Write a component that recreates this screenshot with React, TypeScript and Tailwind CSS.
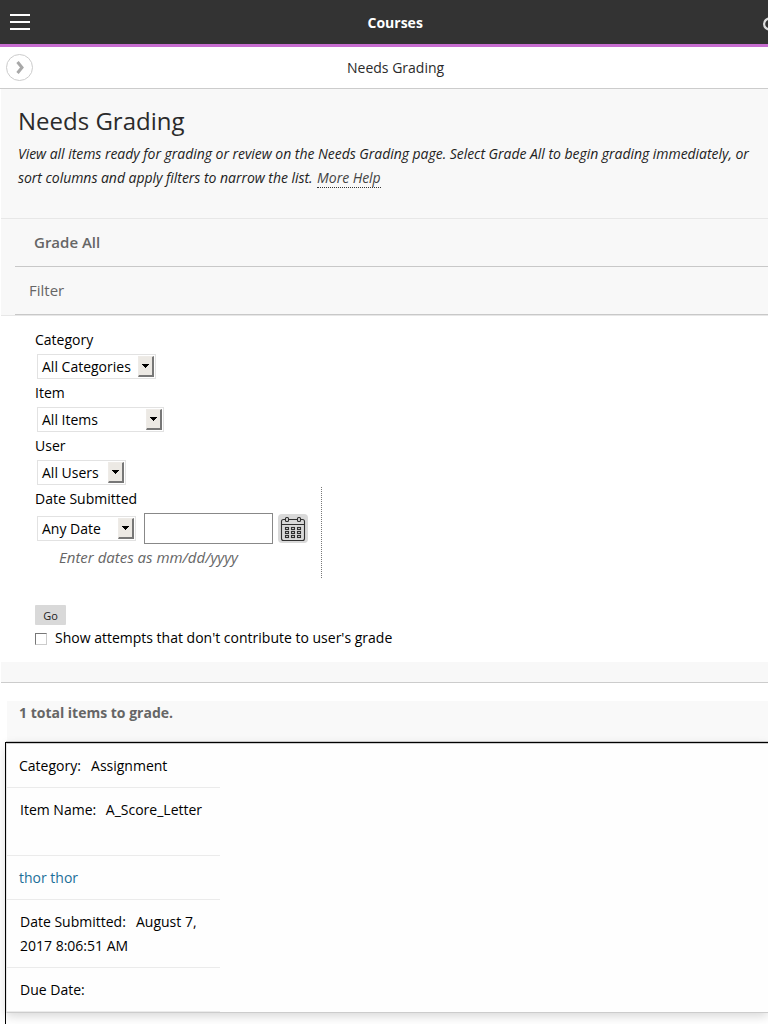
import type { ReactNode } from "react";

function Select({ label, className }: { label: string; className: string }) {
  return (
    <div
      className={`ml-0.5 flex h-[25px] shrink-0 items-center justify-between border border-[#e2e2e2] bg-white pl-1 pr-px ${className}`}
    >
      <span className="whitespace-nowrap">{label}</span>
      <span className="flex h-[21px] w-4 items-center justify-center border border-b-2 border-r-2 border-[#eeebe7] border-b-[#777] border-r-[#777] bg-[#ece9e4]">
        <svg width="7" height="4" viewBox="0 0 7 4" shapeRendering="crispEdges">
          <path d="M0 0H7V1H6V2H5V3H4V4H3V3H2V2H1V1H0Z" fill="#000" />
        </svg>
      </span>
    </div>
  );
}

function Field({ label, children }: { label: string; children: ReactNode }) {
  return (
    <div className="h-[53px]">
      <div className="h-7 leading-7">{label}</div>
      {children}
    </div>
  );
}

function CalendarIcon() {
  return (
    <svg width="26" height="26" viewBox="0 0 26 26" fill="none" stroke="#303030" strokeWidth="1.1">
      <path d="M5 3.5H3.5Q1.5 3.5 1.5 5.5V22.5Q1.5 24.5 3.5 24.5H22.5Q24.5 24.5 24.5 22.5V5.5Q24.5 3.5 22.5 3.5H21M8.5 3.5H17.5M1.5 8.5H24.5" />
      <rect x="5.5" y="1.5" width="3" height="4" rx="1" />
      <rect x="17.5" y="1.5" width="3" height="4" rx="1" />
      {[11.5, 15.5, 19.5].map((y) =>
        [5.5, 11.5, 17.5].map((x) => <rect key={`${x}-${y}`} x={x} y={y} width="3" height="2" />),
      )}
    </svg>
  );
}

function Row({ children, className }: { children: ReactNode; className: string }) {
  return <div className={`w-[213px] border-b border-[#ebebeb] pt-2.5 leading-6 ${className}`}>{children}</div>;
}

export default function App() {
  return (
    <div className="flex h-[1024px] w-[768px] flex-col overflow-hidden bg-white font-['Open_Sans',sans-serif] text-sm text-black">
      <header className="flex h-[47px] shrink-0 items-center border-b-[3px] border-[#c76dd0] bg-[#333]">
        <div className="flex w-[367.5px] shrink-0 flex-col gap-[5px] pl-2.5">
          <span className="h-0.5 w-5 bg-white" />
          <span className="h-0.5 w-5 bg-white" />
          <span className="h-0.5 w-5 bg-white" />
        </div>
        <h1 className="flex-1 pt-0.5 text-sm font-bold text-white">Courses</h1>
        <svg className="mt-1 shrink-0" width="6" height="14" viewBox="0 0 6 14" fill="none" stroke="#ddd" strokeWidth="2.2">
          <circle cx="7.6" cy="7" r="5.5" />
        </svg>
      </header>

      <div className="flex h-[42px] shrink-0 items-center border-b border-[#ccc]">
        <div className="w-[347px] shrink-0 pl-1.5">
          <div className="flex size-[27px] items-center justify-center rounded-full border border-[#ccc]">
            <svg className="ml-0.5" width="9" height="14" viewBox="0 0 9 14" fill="none" stroke="#a8a8a8" strokeWidth="3">
              <path d="M1.5 1L6 6.5L1.5 12" />
            </svg>
          </div>
        </div>
        <span className="text-[#2b2b2b]">Needs Grading</span>
      </div>

      <section className="ml-px h-[130px] shrink-0 border-b border-[#e7e7e7] bg-[#f8f8f8] pl-[17px] pt-3.5 text-[#2b2b2b]">
        <h2 className="text-2xl leading-9">Needs Grading</h2>
        <p className="whitespace-nowrap pt-[3px] italic leading-6 tracking-[-0.037px] text-[#222]">
          View all items ready for grading or review on the Needs Grading page. Select Grade All to begin grading immediately, or
          <br />
          sort columns and apply filters to narrow the list.{" "}
          <span className="ml-px border-b border-dotted border-[#333] text-[#444]">More Help</span>
        </p>
      </section>

      <section className="ml-px h-[97px] shrink-0 border-b border-[#e7e7e7] bg-[#f8f8f8] pl-3.5 text-[#666]">
        <div className="h-12 border-b border-[#c8c8c8] pl-[19px] text-[15px] font-semibold leading-[47px]">Grade All</div>
        <div className="h-12 border-b border-[#c8c8c8] pl-3.5 text-[15px] leading-[47px]">Filter</div>
      </section>

      <section className="h-[346px] shrink-0 pl-[35px] pt-2.5">
        <Field label="Category">
          <Select label="All Categories" className="w-[119px]" />
        </Field>
        <Field label="Item">
          <Select label="All Items" className="w-[127px]" />
        </Field>
        <Field label="User">
          <Select label="All Users" className="w-[89px]" />
        </Field>
        <div className="mt-[2px] h-[91px] w-[287px] border-r border-dotted border-[#777]">
          <div className="h-[26px] leading-6">Date Submitted</div>
          <div className="flex items-center">
            <Select label="Any Date" className="w-[99px]" />
            <div className="ml-2 h-[31px] w-[129px] border border-[#888]" />
            <div className="ml-[5px] flex h-[29px] w-[30px] items-center justify-center rounded-sm bg-[#d9d9d9]">
              <CalendarIcon />
            </div>
          </div>
          <div className="pl-6 text-[15px] italic leading-[26px] text-[#666]">Enter dates as mm/dd/yyyy</div>
        </div>
        <div className="mt-[27px] flex h-5 w-[31px] items-center justify-center rounded-[1px] bg-[#d9d9d9] pt-0.5 text-[11px] text-[#222]">Go</div>
        <div className="flex h-[26px] items-center">
          <span className="mt-0.5 size-3 border border-[#ccc] border-l-[#777] border-t-[#777]" />
          <span className="pl-2">Show attempts that don't contribute to user's grade</span>
        </div>
      </section>

      <div className="ml-px h-[21px] shrink-0 border-b border-[#ccc] bg-[#f8f8f8]" />
      <div className="ml-[7px] mt-[18px] h-10 shrink-0 bg-[#f9f9f9] pl-3 font-bold leading-6 text-[#666]">
        1 total items to grade.
      </div>
      <div className="ml-1.5 h-px shrink-0 bg-[#ccc]" />
      <section className="ml-[5px] flex-1 border-l border-t border-black">
        <div className="h-[270px] border-b border-l border-t border-[#ccc] border-l-[#e5e5e5] bg-[#fefefe] shadow-[0_3px_10px_rgba(0,0,0,0.16)]">
          <Row className="h-[44px] pl-3">Category: <span className="pl-[6.5px]">Assignment</span></Row>
          <Row className="h-[68px] pl-[13px]">Item Name: <span className="pl-1.5">A_Score_Letter</span></Row>
          <Row className="h-[44px] pl-3"><span className="text-[#1c6f99]">thor thor</span></Row>
          <Row className="h-[68px] pl-[13px]">
            Date Submitted: <span className="pl-[6.5px]">August 7,</span>
            <br />2017 8:06:51 AM
          </Row>
          <Row className="h-[44px] pl-[13px]">Due Date:</Row>
        </div>
      </section>
    </div>
  );
}
